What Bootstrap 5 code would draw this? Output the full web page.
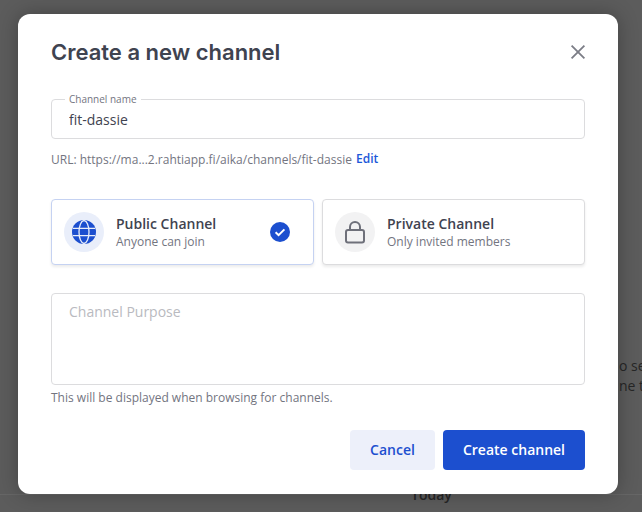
<!DOCTYPE html>
<html lang="en">
<head>
  <meta charset="UTF-8" />
  <meta name="viewport" content="width=device-width, initial-scale=1.0"/>
  <title>Create a new channel</title>
  <link href="https://cdn.jsdelivr.net/npm/bootstrap@5.3.3/dist/css/bootstrap.min.css" rel="stylesheet">
  <style>
    html, body { height: 100%; }
    body {
      font-family: "Open Sans", "Liberation Sans", sans-serif;
      background: #5c5c5c;
      color: #3f4350;
      overflow: hidden;
      position: relative;
    }
    .page-behind { position: absolute; color: #262626; font-size: 14px; line-height: 20px; white-space: nowrap; }
    .behind-1 { left: 619px; top: 356px; }
    .behind-2 { left: 619px; top: 376px; }
    .behind-3 { left: 411px; top: 485px; font-weight: 600; }
    .page-rule { position: absolute; left: 0; right: 0; top: 494px; border-top: 1px solid #666; }
    .dlg {
      position: relative;
      width: 600px;
      height: 480px;
      margin: 14px 0 0 18px;
      padding: 0 33px;
      background: #fff;
      border-radius: 12px;
      box-shadow: 0 0 20px rgba(0,0,0,.28);
    }
    .dlg-title {
      font-family: Inter, "Liberation Sans", sans-serif;
      font-size: 22px;
      font-weight: 600;
      line-height: 28px;
      color: #3f4350;
      margin: 0;
    }
    .dlg-head { height: 85px; padding-top: 24px; }
    .dlg-close { color: #7b7d86; line-height: 0; margin-right: -2px; margin-top: 5px; }
    .name-field { position: relative; }
    .name-field label {
      position: absolute; left: 14px; top: -6px;
      padding: 0 4px; background: #fff;
      font-size: 10px; line-height: 12px; color: #73757f;
    }
    .name-field input, .purpose-input {
      border: 1px solid #dcdcde;
      border-radius: 4px;
      color: #3f4350;
      font-size: 14px;
      padding: 0 17px;
    }
    .name-field input { height: 40px; }
    .url-line { font-size: 12px; line-height: 16px; color: #73757f; margin-top: 13px; height: 16px; }
    .url-edit { color: #1c58d9; font-weight: 600; text-decoration: none; margin-left: 1px; position: relative; top: -1px; }
    .kind-row { margin-top: 31px; }
    .kind-card {
      flex: 1 1 0;
      height: 66px;
      border: 1px solid #dcdcde;
      border-radius: 4px;
      padding: 0 12px;
      box-shadow: 0 2px 3px rgba(0,0,0,.08);
      background: #fff;
    }
    .kind-on { border-color: #c5d2f2; }
    .kind-disc {
      width: 40px; height: 40px; flex: none;
      border-radius: 50%;
      background: #f2f2f3;
      color: #6e707a;
    }
    .kind-on .kind-disc { background: #e9eefa; color: #1c4fcf; }
    .kind-name { font-size: 14px; font-weight: 600; line-height: 18px; color: #3f4350; }
    .kind-sub { font-size: 12px; line-height: 16px; color: #73757f; margin-top: 1px; }
    .kind-text { margin-left: 12px; }
    .kind-check { margin-right: 11px; line-height: 0; }
    .purpose-input {
      display: block;
      width: 100%;
      height: 92px;
      margin-top: 28px;
      padding: 7px 17px;
      resize: none;
    }
    .purpose-input::placeholder { color: #b9bac0; opacity: 1; }
    .help-line { font-size: 12px; line-height: 16px; color: #73757f; margin-top: 5px; }
    .dlg-foot { margin-top: 24px; }
    .dlg-btn { height: 40px; border-radius: 4px; border: 0; font-size: 14px; font-weight: 600; padding: 0 0 2px; }
    .btn-cancel { width: 85px; background: #edf0fa; color: #1c4fcf; }
    .btn-create { width: 142px; background: #1c4fcf; color: #fff; }
  </style>
</head>
<body>
  <!-- page behind the dialog -->
  <div class="page-behind behind-1">o see</div>
  <div class="page-behind behind-2">ne to</div>
  <div class="page-rule"></div>
  <div class="page-behind behind-3">Today</div>

  <div class="dlg">
    <div class="dlg-head d-flex justify-content-between align-items-start">
      <h1 class="dlg-title">Create a new channel</h1>
      <span class="dlg-close">
        <svg width="18" height="18" viewBox="0 0 18 18" fill="none" stroke="currentColor" stroke-width="1.8"><path d="M2.6 2.6l12.8 12.8M15.4 2.6L2.6 15.4"/></svg>
      </span>
    </div>

    <div class="name-field">
      <label for="chan">Channel name</label>
      <input id="chan" class="form-control shadow-none" type="text" value="fit-dassie">
    </div>
    <div class="url-line">URL: https://ma...2.rahtiapp.fi/aika/channels/fit-dassie <a href="#" class="url-edit">Edit</a></div>

    <div class="kind-row d-flex gap-2">
      <div class="kind-card kind-on d-flex align-items-center">
        <div class="kind-disc d-flex align-items-center justify-content-center">
          <svg width="24" height="24" viewBox="0 0 24 24" fill="none"><circle cx="12" cy="12" r="12" fill="currentColor"/><g stroke="#e9eefa" stroke-width="1.3"><ellipse cx="12" cy="12" rx="5" ry="11.4"/><path d="M1 8.3h22M1 15.7h22"/></g></svg>
        </div>
        <div class="kind-text flex-grow-1">
          <div class="kind-name">Public Channel</div>
          <div class="kind-sub">Anyone can join</div>
        </div>
        <span class="kind-check">
          <svg width="20" height="20" viewBox="0 0 20 20"><circle cx="10" cy="10" r="10" fill="#1c4fcf"/><path d="M5.6 10.2l3 3 5.8-5.8" fill="none" stroke="#fff" stroke-width="2"/></svg>
        </span>
      </div>
      <div class="kind-card d-flex align-items-center">
        <div class="kind-disc d-flex align-items-center justify-content-center">
          <svg width="24" height="24" viewBox="0 0 24 24" fill="none" stroke="currentColor" stroke-width="2"><rect x="3" y="10" width="18" height="12.5" rx="2"/><path d="M7 10V7a5 5 0 0 1 10 0v3"/></svg>
        </div>
        <div class="kind-text flex-grow-1">
          <div class="kind-name">Private Channel</div>
          <div class="kind-sub">Only invited members</div>
        </div>
      </div>
    </div>

    <textarea class="purpose-input form-control shadow-none" placeholder="Channel Purpose"></textarea>
    <div class="help-line">This will be displayed when browsing for channels.</div>

    <div class="dlg-foot d-flex justify-content-end gap-2">
      <button type="button" class="btn dlg-btn btn-cancel">Cancel</button>
      <button type="button" class="btn dlg-btn btn-create">Create channel</button>
    </div>
  </div>

  <script src="https://cdn.jsdelivr.net/npm/bootstrap@5.3.3/dist/js/bootstrap.bundle.min.js"></script>
</body>
</html>
